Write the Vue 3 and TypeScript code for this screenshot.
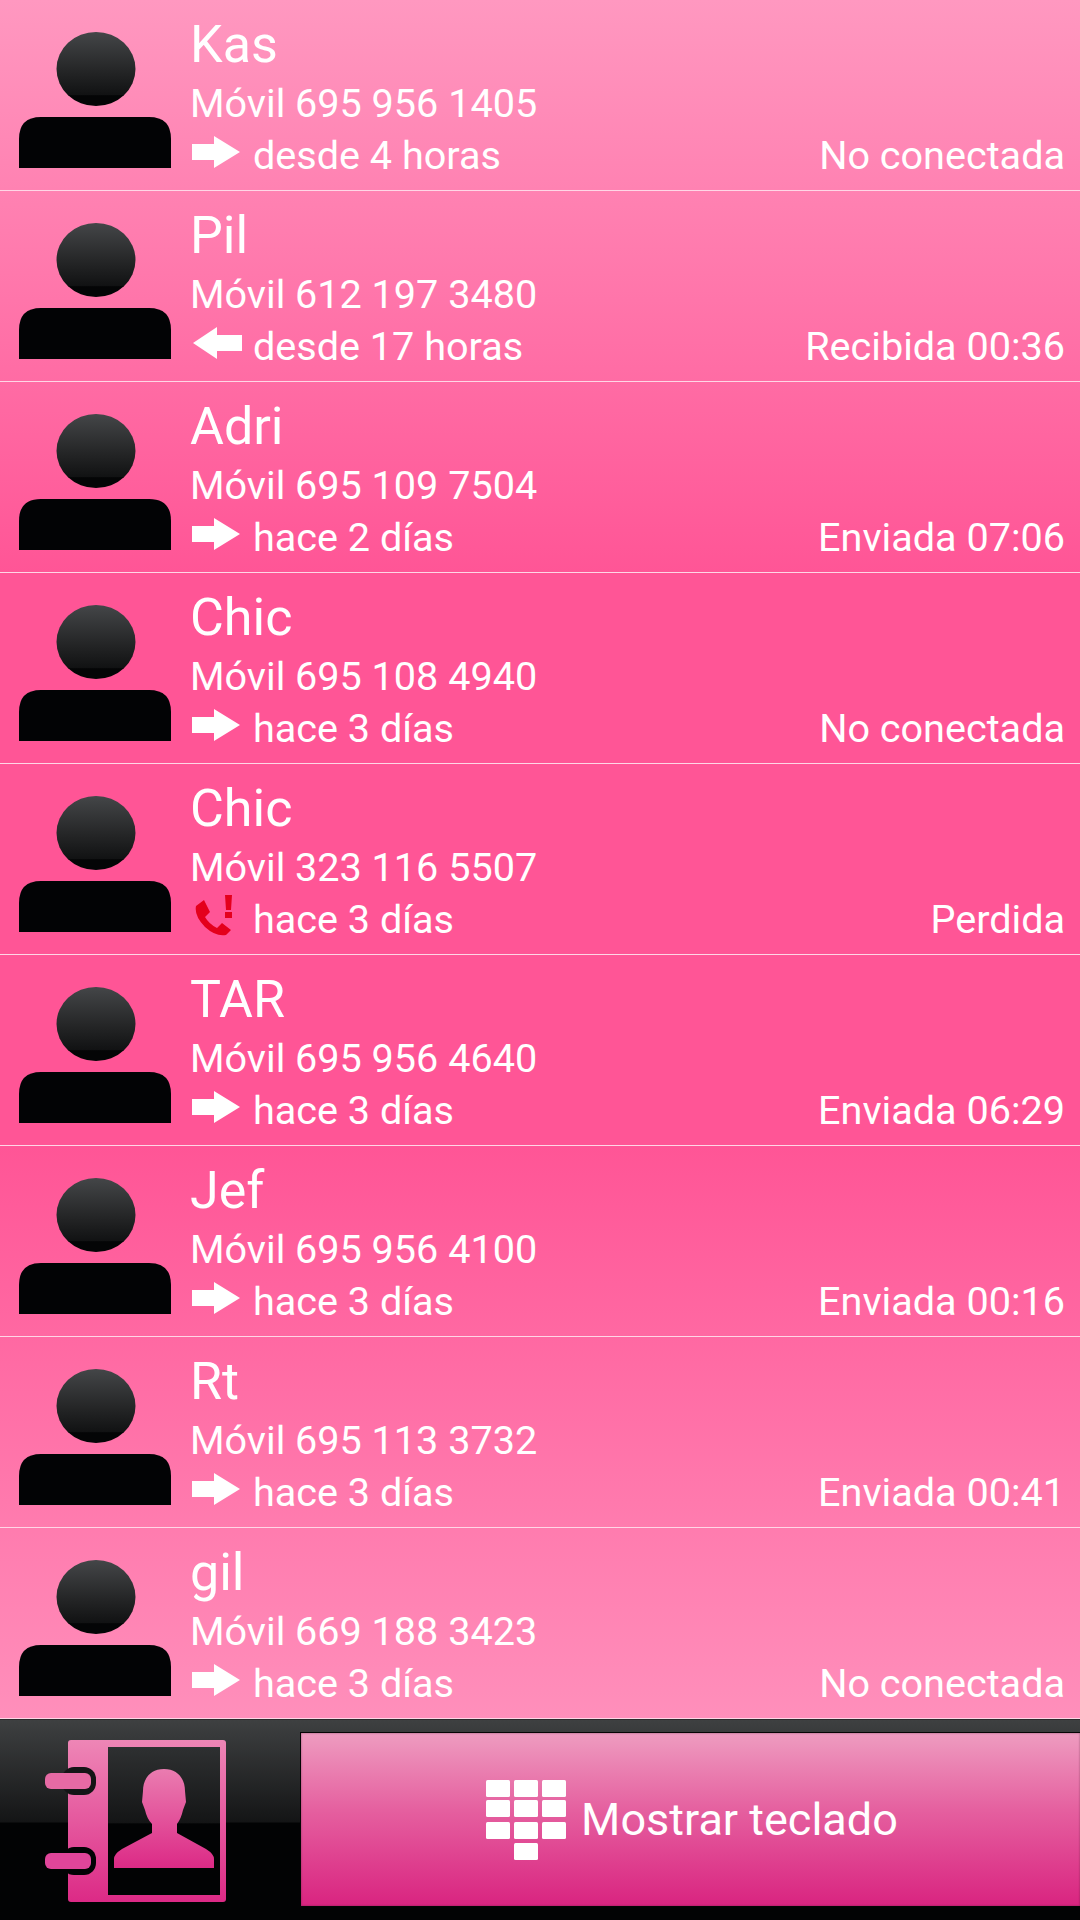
<script setup lang="ts">
type CallKind = 'out' | 'in' | 'missed'

interface CallRow {
  name: string
  phone: string
  when: string
  status: string
  kind: CallKind
}

const calls: CallRow[] = [
  { name: 'Kas', phone: 'Móvil 695 956 1405', when: 'desde 4 horas', status: 'No conectada', kind: 'out' },
  { name: 'Pil', phone: 'Móvil 612 197 3480', when: 'desde 17 horas', status: 'Recibida 00:36', kind: 'in' },
  { name: 'Adri', phone: 'Móvil 695 109 7504', when: 'hace 2 días', status: 'Enviada 07:06', kind: 'out' },
  { name: 'Chic', phone: 'Móvil 695 108 4940', when: 'hace 3 días', status: 'No conectada', kind: 'out' },
  { name: 'Chic', phone: 'Móvil 323 116 5507', when: 'hace 3 días', status: 'Perdida', kind: 'missed' },
  { name: 'TAR', phone: 'Móvil 695 956 4640', when: 'hace 3 días', status: 'Enviada 06:29', kind: 'out' },
  { name: 'Jef', phone: 'Móvil 695 956 4100', when: 'hace 3 días', status: 'Enviada 00:16', kind: 'out' },
  { name: 'Rt', phone: 'Móvil 695 113 3732', when: 'hace 3 días', status: 'Enviada 00:41', kind: 'out' },
  { name: 'gil', phone: 'Móvil 669 188 3423', when: 'hace 3 días', status: 'No conectada', kind: 'out' },
]

const keys = [
  [0, 0], [28, 0], [56, 0],
  [0, 20], [28, 20], [56, 20],
  [0, 42], [28, 42], [56, 42],
  [28, 63],
]
</script>

<template>
  <div class="screen">
    <div class="list">
      <div v-for="(c, i) in calls" :key="i" class="row">
        <svg class="avatar" width="191" height="190" viewBox="0 0 191 190">
          <defs>
            <linearGradient :id="'head' + i" x1="0" y1="0" x2="0" y2="1">
              <stop offset="0" stop-color="#444648" />
              <stop offset="0.55" stop-color="#232425" />
              <stop offset="0.85" stop-color="#111213" />
              <stop offset="0.86" stop-color="#040506" />
              <stop offset="1" stop-color="#040506" />
            </linearGradient>
          </defs>
          <ellipse cx="96" cy="69" rx="39.5" ry="37" :fill="`url(#head${i})`" />
          <path d="M19 168V139Q19 117 41 117H149Q171 117 171 139V168Z" fill="#020305" />
        </svg>
        <div class="info">
          <div class="name">{{ c.name }}</div>
          <div class="phone">{{ c.phone }}</div>
          <div class="meta">
            <svg v-if="c.kind === 'out'" class="call-icon" width="52" height="32" viewBox="0 0 52 32">
              <path d="M2 8H24V0L50 16L24 32V24H2Z" fill="#fff" />
            </svg>
            <svg v-else-if="c.kind === 'in'" class="call-icon" width="52" height="32" viewBox="0 0 52 32">
              <path d="M52 8H27V0L3 16L27 32V24H52Z" fill="#fff" />
            </svg>
            <svg v-else class="call-icon" width="52" height="32" viewBox="0 0 52 32">
              <path d="M6 6L14 0L20 12L15 17Q19 24 27 28L32 23L41 30L36 35Q26 37 15 27Q4 16 6 6Z" fill="#e4001c" />
              <path d="M35 -5H42L41 10H36Z M35 12H42V18H35Z" fill="#e4001c" />
            </svg>
            <span class="when">{{ c.when }}</span>
            <span class="status">{{ c.status }}</span>
          </div>
        </div>
      </div>
    </div>

    <div class="bar">
      <svg class="book" width="300" height="199" viewBox="0 1 300 199">
        <defs>
          <linearGradient id="bookFill" x1="0" y1="0" x2="0" y2="1">
            <stop offset="0" stop-color="#ee86b6" />
            <stop offset="1" stop-color="#dc2a86" />
          </linearGradient>
          <linearGradient id="personFill" x1="0" y1="0" x2="0" y2="1">
            <stop offset="0" stop-color="#ea7cb0" />
            <stop offset="1" stop-color="#dc2a86" />
          </linearGradient>
          <linearGradient id="panelFill" x1="0" y1="0" x2="0" y2="1">
            <stop offset="0" stop-color="#2e3031" />
            <stop offset="0.51" stop-color="#141516" />
            <stop offset="0.52" stop-color="#020304" />
            <stop offset="1" stop-color="#020304" />
          </linearGradient>
        </defs>
        <!-- viewBox y=0 is screen y=1720 -->
        <rect x="68" y="21" width="158" height="162" rx="3" fill="url(#bookFill)" />
        <rect x="108" y="28" width="112" height="148" fill="url(#panelFill)" />
        <rect x="62" y="48" width="34" height="28" rx="12" fill="#141516" />
        <rect x="62" y="128" width="34" height="28" rx="12" fill="#020304" />
        <rect x="45" y="54" width="46" height="16" rx="6" fill="#e66aa4" />
        <rect x="45" y="134" width="46" height="16" rx="6" fill="#e0459a" />
        <path d="M164 50C178 50 185 60 185 72L186 83L183 91Q181 100 177 105V114L206 130Q214 135 214 140V149H114V140Q114 135 122 130L152 114V105Q147 100 145 91L142 83L143 72C143 60 150 50 164 50Z" fill="url(#personFill)" />
      </svg>
      <button class="dial">
        <svg class="keypad" width="80" height="80" viewBox="0 0 80 80">
          <rect v-for="(k, i) in keys" :key="i" :x="k[0]" :y="k[1]" width="24" height="17" rx="1.5" fill="#fff" />
        </svg>
        <span>Mostrar teclado</span>
      </button>
    </div>
  </div>
</template>

<style scoped>
.screen {
  width: 1080px;
  height: 1920px;
  display: flex;
  flex-direction: column;
  overflow: hidden;
  font-family: Roboto, "Noto Sans", sans-serif;
  color: #fff;
}

.list {
  height: 1719px;
  background: linear-gradient(to bottom, #ff98c0 0, #ff5596 573px, #ff5596 1146px, #ff8fbb 1719px);
}

.row {
  height: 191px;
  box-sizing: border-box;
  border-bottom: 1px solid #ffd6e6;
  display: flex;
}

.avatar {
  flex: none;
}

.info {
  flex: 1;
  padding: 13px 15px 0 0;
  margin-left: -1px;
}

.name {
  font-size: 52px;
  line-height: 64px;
  margin-bottom: 1px;
}

.phone {
  font-size: 39.6px;
  line-height: 52px;
}

.meta {
  display: flex;
  align-items: center;
  font-size: 39.6px;
  line-height: 52px;
}

.call-icon {
  flex: none;
  margin: -8px 11px 0 0;
  overflow: visible;
  filter: blur(0.6px);
}

.status {
  margin-left: auto;
}

.bar {
  flex: 1;
  display: flex;
  align-items: flex-start;
  border-top: 1px solid #2a2b2c;
  background: linear-gradient(to bottom, #3e4041 0, #141516 51%, #020304 51.5%, #020304 100%);
}

.book {
  flex: none;
}

.dial {
  flex: 1;
  height: 175px;
  margin-top: 12px;
  display: flex;
  align-items: center;
  justify-content: center;
  gap: 15px;
  padding: 0 0 0 3px;
  border: 1px solid #050505;
  border-right: 0;
  box-shadow: inset 0 0 2px rgba(70, 30, 50, 0.6);
  color: #fff;
  font-family: inherit;
  font-size: 45px;
  background: linear-gradient(to bottom, #ee9cc0 0, #e55f9f 45%, #d92480 100%);
}

.keypad {
  flex: none;
  filter: blur(0.4px);
}
</style>

<style>
html, body {
  margin: 0;
  background: #000;
}
</style>
